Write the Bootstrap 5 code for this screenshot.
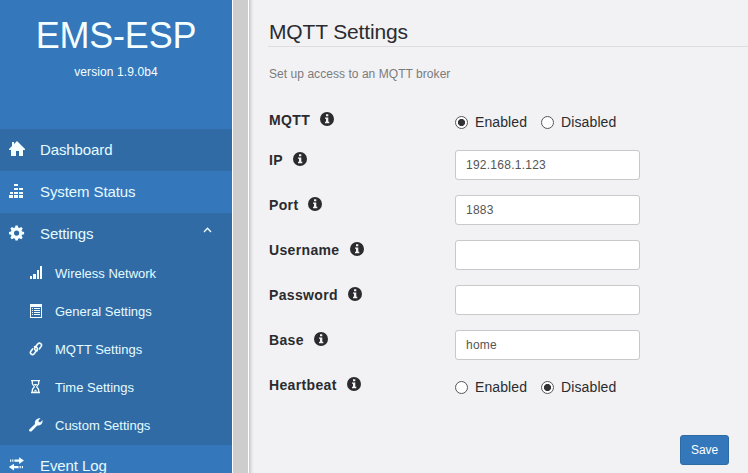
<!DOCTYPE html>
<html lang="en">
<head>
<meta charset="utf-8">
<title>EMS-ESP</title>
<link href="https://cdn.jsdelivr.net/npm/bootstrap@5.3.0/dist/css/bootstrap.min.css" rel="stylesheet">
<style>
body{font-family:"Liberation Sans",Arial,sans-serif;background:#f2f2f4;color:#2b2b2f;font-size:14px;line-height:20px}
.shell{height:473px}
.side{width:232px;background:#3577bb;color:#f4ffff}
.brand{height:129px;padding-top:14px}
.brand h1{font-size:36px;line-height:44px;margin:0;letter-spacing:-.2px;font-weight:400}
.brand p{font-size:12px;line-height:18px;margin:5px 0 0;letter-spacing:.1px}
.side .nav-link{color:#e6fbff;height:42px;padding:0 18px 0 8px;font-size:15px;letter-spacing:-.1px;flex-shrink:0}
.side .nav-link svg{width:17px;height:17px;fill:#f4ffff;flex:none;margin-bottom:1px}
.side .nav-link span{margin-left:15px}
.side .shade{background:#306ba6}
.side .nav-sub{height:38px;padding-left:29px;font-size:13px;letter-spacing:0}
.side .nav-sub svg{width:14px;height:14px;margin-bottom:2px}
.side .nav-sub span{margin-left:12px}
.side .nav-link svg.caret{width:9px;height:6px;fill:none;stroke:#f4ffff;stroke-width:1.3;margin-bottom:8px;margin-right:2px}
.divider{width:17px;background:#cdcdcd;border-left:1px solid #fff;border-right:1px solid #fff}
.fade-edge{width:5px;background:linear-gradient(90deg,#c6c6c8,#e4e4e6 50%,#f2f2f4)}
.main{padding:19px 0 0 14px;min-width:0}
.main h2{font-size:21px;line-height:26px;height:28px;margin:0;padding-left:1px;border-bottom:1px solid #dedee1;letter-spacing:-.15px;font-weight:400}
.hint{font-size:12px;line-height:18px;color:#7b7b7d;margin:18px 0 27px;padding-left:1px;letter-spacing:.05px}
.setting{height:30px;margin-bottom:15px}
.setting.first{height:25px}
.lab{width:187px;padding-left:1px;font-weight:700;letter-spacing:.35px;line-height:20px}
.lab svg{width:14px;height:14px;margin-left:10px;margin-top:2px}
.setting .form-control{width:185px;height:30px;padding:5px 10px;font-size:12px;line-height:18px;letter-spacing:.25px;color:#555;border:1px solid #c9c9cc;border-radius:3px;font-family:inherit}
.radios{height:25px}
.setting .form-check-input{width:13px;height:13px;margin:0;border:1px solid #55555a;background-color:#fff;box-shadow:none;float:none}
.setting .form-check-input:checked{background-color:#fff;background-image:radial-gradient(circle,#333337 0 3.2px,transparent 3.9px)}
.radios label{margin-left:7px;margin-right:14px;letter-spacing:.1px;padding-bottom:2px}
.btn-save{width:49px;height:30px;padding:0;font-size:12px;line-height:28px;background:#3577bb;border:1px solid #2e6da4;border-radius:3px;color:#fff;letter-spacing:-.1px;margin-right:19px;margin-top:15px}
</style>
<script src="https://cdn.jsdelivr.net/npm/bootstrap@5.3.0/dist/js/bootstrap.bundle.min.js"></script>
</head>
<body class="overflow-hidden">
<svg width="0" height="0" class="d-none"><symbol id="info" viewBox="0 0 14 14"><circle cx="7" cy="7" r="7" fill="#2b2b2f"/><path fill="#f2f2f4" d="M6 2.3h2.3v2H6zM5 5.4h3.3v4.4h1v1.4H5V9.8h1V6.8H5z"/></symbol></svg>
<div class="shell d-flex overflow-hidden">
<aside class="side flex-shrink-0 overflow-hidden">
  <div class="brand text-center"><h1>EMS-ESP</h1><p>version 1.9.0b4</p></div>
  <nav class="nav flex-column flex-nowrap">
    <a class="nav-link shade d-flex align-items-center" href="#"><svg viewBox="0 0 17 17"><path d="M9 0 17 8v1h-2v6h-4v-5H8v5H3V9H1V8l3-3V1h2v2z"/></svg><span>Dashboard</span></a>
    <a class="nav-link d-flex align-items-center" href="#"><svg viewBox="0 0 17 17"><path d="M6 1h4v2H6zM6 5h4v2H6zM11 5h4v2h-4zM2 9h3v2H2zM6 9h4v2H6zM11 9h4v2h-4zM1 12h4v3H1zM6 12h4v3H6zM11 12h4v3h-4z"/></svg><span>System Status</span></a>
    <a class="nav-link shade d-flex align-items-center" href="#"><svg viewBox="0 0 17 17"><path fill-rule="evenodd" d="M7.500.5h2.200l.5 2 1.100.5 1.900-1.100 1.500 1.500-1.100 2 .5 1.100 2 .5v2.200l-2 .5-.5 1.100 1.100 2-1.500 1.500-1.900-1.100-1.100.5-.5 1.800H7.500l-.5-1.800-1.100-.5-2 1.100-1.500-1.500 1.100-2L3 9.700l-2-.5V7l2-.5.5-1.100-1.100-2 1.500-1.500L5.900 3 7 2.500zM8.600 5.500a2.600 2.600 0 1 0 0 5.200 2.600 2.600 0 0 0 0-5.200z"/></svg><span>Settings</span><svg class="caret ms-auto" viewBox="0 0 9 6"><path d="M1 5 4.500 1.200 8 5"/></svg></a>
    <a class="nav-link nav-sub shade d-flex align-items-center" href="#"><svg viewBox="0 0 14 14"><path d="M1 10h2v3H1zM4 8h3v5H4zM8 4h2v9H8zM11 0h2v13h-2z"/></svg><span>Wireless Network</span></a>
    <a class="nav-link nav-sub shade d-flex align-items-center" href="#"><svg viewBox="0 0 14 14"><path fill-rule="evenodd" d="M1 0h12v14H1zM2 3v10h10V3z"/><path d="M3 4h1v1H3zM5 4h6v1H5zM3 6h1v1H3zM5 6h6v1H5zM3 8h1v1H3zM5 8h6v1H5zM3 10h1v1H3zM5 10h6v1H5z"/></svg><span>General Settings</span></a>
    <a class="nav-link nav-sub shade d-flex align-items-center" href="#"><svg viewBox="0 0 14 14"><g fill="none" stroke="#f4ffff" stroke-width="1.600" stroke-linecap="round"><path d="M8.300 8.800C6.300 9 4.900 7.200 6.100 5.600L8.700 2c2-2.200 5 .2 3.300 2.600L10.300 7"/><path d="M5.500 4.700c2.200-.3 3.600 1.600 2.300 3.400L5.200 11.700c-2 2.200-4.900-.2-3.300-2.500L3.600 6.900"/></g></svg><span>MQTT Settings</span></a>
    <a class="nav-link nav-sub shade d-flex align-items-center" href="#"><svg viewBox="0 0 14 14"><g fill="none" stroke="#f4ffff" stroke-width="1.300"><path d="M2 .700h9M2 12.500h9M3.300 1v2.300c0 1.800 2 2.200 2 3.400s-2 1.700-2 3.500v2.300M9.700 1v2.300c0 1.800-2 2.200-2 3.400s2 1.700 2 3.500v2.300"/></g><path d="M4.500 4h4L6.500 6zM4.500 11.500l2-2 2 2z"/></svg><span>Time Settings</span></a>
    <a class="nav-link nav-sub shade d-flex align-items-center" href="#"><svg viewBox="0 0 14 14"><path d="M.3 11.400 6 5.900C5.400 3 7.500 0 11.500.3L9.500 2.400l.3 1.500 1.700.3L13.600 2.100C14 5.800 11.300 8 8.300 7.500L2.700 13.200C1.300 14.200-.8 12.700.3 11.400z"/></svg><span>Custom Settings</span></a>
    <a class="nav-link d-flex align-items-center" href="#"><svg viewBox="0 0 17 17"><path d="M2 2.500h1.200v2.200H2zM4.200 2.500h1.200v2.200H4.200zM6.400 2.500h4.700V.2L16 3.600l-4.900 3.400V4.700H6.400zM15 9h-1.200v2.200H15zM12.800 9h-1.200v2.200h1.200zM10.600 9H6V6.700L.8 10.100 6 13.500v-2.300h4.600z"/></svg><span>Event Log</span></a>
  </nav>
</aside>
<div class="divider flex-shrink-0"></div><div class="fade-edge flex-shrink-0"></div>
<main class="main flex-grow-1">
  <h2>MQTT Settings</h2>
  <p class="hint">Set up access to an MQTT broker</p>
  <form>
    <div class="setting first d-flex"><div class="lab d-flex">MQTT<svg><use href="#info"/></svg></div><div class="radios d-flex align-items-center"><input class="form-check-input" type="radio" name="mqtt" id="m1" checked><label for="m1">Enabled</label><input class="form-check-input" type="radio" name="mqtt" id="m0"><label for="m0">Disabled</label></div></div>
    <div class="setting d-flex"><div class="lab d-flex">IP<svg><use href="#info"/></svg></div><input class="form-control" value="192.168.1.123"></div>
    <div class="setting d-flex"><div class="lab d-flex">Port<svg><use href="#info"/></svg></div><input class="form-control" value="1883"></div>
    <div class="setting d-flex"><div class="lab d-flex">Username<svg><use href="#info"/></svg></div><input class="form-control"></div>
    <div class="setting d-flex"><div class="lab d-flex">Password<svg><use href="#info"/></svg></div><input class="form-control" type="password"></div>
    <div class="setting d-flex"><div class="lab d-flex">Base<svg><use href="#info"/></svg></div><input class="form-control" value="home"></div>
    <div class="setting d-flex"><div class="lab d-flex">Heartbeat<svg><use href="#info"/></svg></div><div class="radios d-flex align-items-center"><input class="form-check-input" type="radio" name="hb" id="h1"><label for="h1">Enabled</label><input class="form-check-input" type="radio" name="hb" id="h0" checked><label for="h0">Disabled</label></div></div>
    <div class="d-flex justify-content-end"><button type="button" class="btn btn-save">Save</button></div>
  </form>
</main>
</div>
</body>
</html>
